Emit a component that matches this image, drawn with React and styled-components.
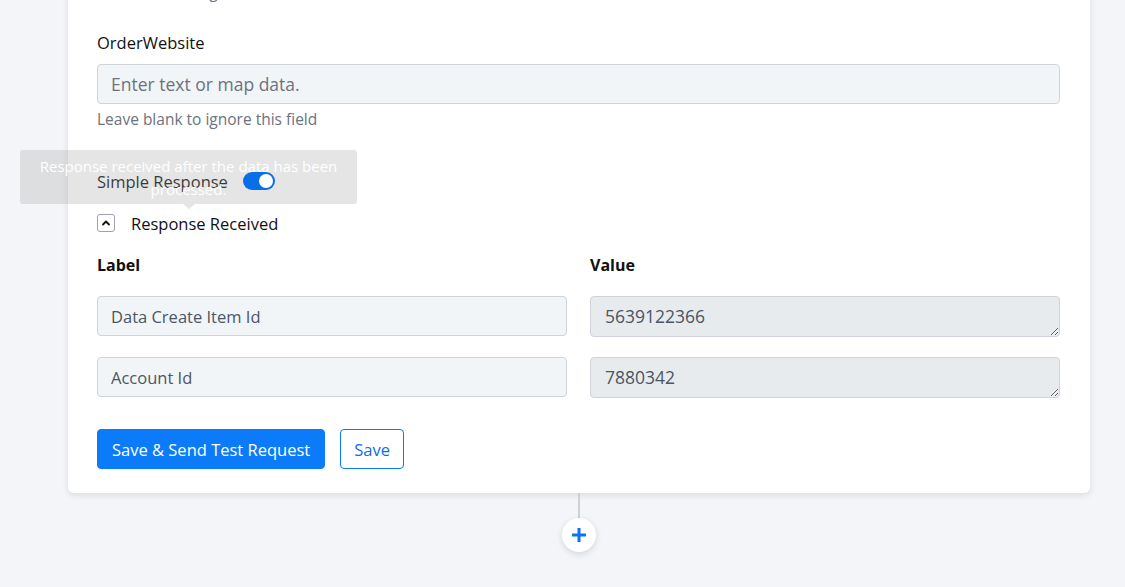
import React from 'react';
import styled, { createGlobalStyle } from 'styled-components';

const GlobalStyle = createGlobalStyle`
	html, body {
		margin: 0;
		padding: 0;
		background: #f3f5f8;
		font-family: 'Open Sans', 'Noto Sans', sans-serif;
		color: #111;
	}
	* {
		box-sizing: border-box;
	}
`;

const rows = [
	{ label: 'Data Create Item Id', value: '5639122366' },
	{ label: 'Account Id', value: '7880342' },
];

const App = () => {
	return (
		<>
			<GlobalStyle />
			<Page>
				<Card>
					<Hint>Leave blank to ignore this field</Hint>
					<Field>
						<FieldLabel>OrderWebsite</FieldLabel>
						<TextInput placeholder="Enter text or map data." $big />
						<Hint>Leave blank to ignore this field</Hint>
					</Field>

					<ToggleRow>
						<Tooltip>Response received after the data has been processed.</Tooltip>
						<span>Simple Response</span>
						<Switch $on>
							<Knob />
						</Switch>
					</ToggleRow>

					<CollapseRow>
						<ChevronBox>
							<svg width="10" height="10" viewBox="0 0 10 10">
								<path d="M2 6.5 L5 3.5 L8 6.5" fill="none" stroke="#111" strokeWidth="1.8" strokeLinecap="round" strokeLinejoin="round" />
							</svg>
						</ChevronBox>
						<span>Response Received</span>
					</CollapseRow>

					<MapGrid>
						<ColHead>Label</ColHead>
						<ColHead>Value</ColHead>
						{rows.map((r) => (
							<React.Fragment key={r.label}>
								<TextInput defaultValue={r.label} />
								<ValueBox defaultValue={r.value} readOnly />
							</React.Fragment>
						))}
					</MapGrid>

					<Actions>
						<Button $primary>Save &amp; Send Test Request</Button>
						<Button>Save</Button>
					</Actions>
				</Card>

				<Connector />
				<AddButton>
					<svg width="18" height="18" viewBox="0 0 18 18">
						<path d="M9 2 V16 M2 9 H16" stroke="#0b72f0" strokeWidth="3" />
					</svg>
				</AddButton>
			</Page>
		</>
	);
};

const Page = styled.div`
	height: 587px;
	overflow: hidden;
	display: flex;
	flex-direction: column;
	align-items: center;
	padding: 0 35px 0 68px;
`;

const Card = styled.section`
	width: 100%;
	margin-top: -40px;
	padding: 22px 30px 24px 29px;
	background: #fff;
	border-radius: 6px;
	box-shadow: 0 2px 6px rgba(30, 40, 60, 0.12);
`;

const Hint = styled.div`
	font-size: 15.5px;
	line-height: 20px;
	color: #6b7280;
`;

const Field = styled.div`
	margin-top: 31px;
	display: flex;
	flex-direction: column;
`;

const FieldLabel = styled.label`
	font-size: 16.5px;
	line-height: 20px;
	margin-bottom: 11px;
`;

const TextInput = styled.input`
	width: 100%;
	height: 40px;
	padding: 0 13px ${({ $big }) => ($big ? '1px' : '0')};
	border: 1px solid #cfd4db;
	border-radius: 4px;
	background: #f2f5f8;
	font-family: inherit;
	font-size: ${({ $big }) => ($big ? '17.5px' : '16.5px')};
	color: #4b5563;
	outline: none;

	& + ${Hint} {
		margin-top: 5px;
	}

	&::placeholder {
		color: #6b7280;
	}
`;

const ToggleRow = styled.div`
	position: relative;
	margin-top: 42px;
	display: flex;
	align-items: center;
	gap: 15px;
	height: 20px;
	font-size: 16.5px;
`;

const Tooltip = styled.div`
	position: absolute;
	left: -77px;
	top: -21px;
	width: 337px;
	padding: 5px 16px 3px;
	background: rgba(160, 160, 160, 0.28);
	border-radius: 3px;
	color: #fff;
	font-size: 15px;
	line-height: 23px;
	text-align: center;
	pointer-events: none;

	&::after {
		content: '';
		position: absolute;
		left: 50%;
		bottom: -5px;
		margin-left: -6px;
		border-left: 6px solid transparent;
		border-right: 6px solid transparent;
		border-top: 5px solid rgba(160, 160, 160, 0.28);
	}
`;

const Switch = styled.span`
	position: relative;
	width: 32px;
	height: 18px;
	border-radius: 9px;
	background: ${({ $on }) => ($on ? '#0a6ee8' : '#c4c9d0')};
`;

const Knob = styled.span`
	position: absolute;
	top: 2px;
	right: 2px;
	width: 14px;
	height: 14px;
	border-radius: 50%;
	background: #fff;
`;

const CollapseRow = styled.div`
	margin-top: 22px;
	display: flex;
	align-items: center;
	gap: 16px;
	height: 20px;
	font-size: 16.5px;
`;

const ChevronBox = styled.span`
	display: flex;
	align-items: center;
	justify-content: center;
	width: 18px;
	height: 18px;
	border: 1px solid #9ca3af;
	border-radius: 3px;
	background: #fff;
`;

const MapGrid = styled.div`
	margin-top: 22px;
	display: grid;
	grid-template-columns: 1fr 1fr;
	column-gap: 23px;
	row-gap: 20px;
`;

const ColHead = styled.div`
	font-size: 16px;
	font-weight: 700;
	line-height: 20px;
	margin-bottom: 1px;
`;

const ValueBox = styled.textarea`
	width: 100%;
	height: 41px;
	padding: 8px 14px;
	border: 1px solid #cfd4db;
	border-radius: 4px;
	background: #e8ebee;
	font-family: inherit;
	font-size: 17.5px;
	line-height: 22px;
	color: #4b5563;
	resize: vertical;
	outline: none;
	overflow: hidden;
`;

const Actions = styled.div`
	margin-top: 31px;
	display: flex;
	gap: 15px;
`;

const Button = styled.button`
	height: 40px;
	padding: 0 ${({ $primary }) => ($primary ? '14px' : '13px')};
	border-radius: 4px;
	font-family: inherit;
	font-size: 16.5px;
	cursor: pointer;
	border: 1px solid #0b7bfa;
	background: ${({ $primary }) => ($primary ? '#0b7bfa' : '#fff')};
	color: ${({ $primary }) => ($primary ? '#fff' : '#0b6fe8')};
`;

const Connector = styled.div`
	width: 2px;
	height: 26px;
	background: #cdd1d6;
`;

const AddButton = styled.button`
	width: 34px;
	height: 34px;
	margin-top: -1px;
	display: flex;
	align-items: center;
	justify-content: center;
	border: none;
	border-radius: 50%;
	background: #fff;
	box-shadow: 0 2px 6px rgba(30, 40, 60, 0.15);
	padding: 0;
`;

export default App;
